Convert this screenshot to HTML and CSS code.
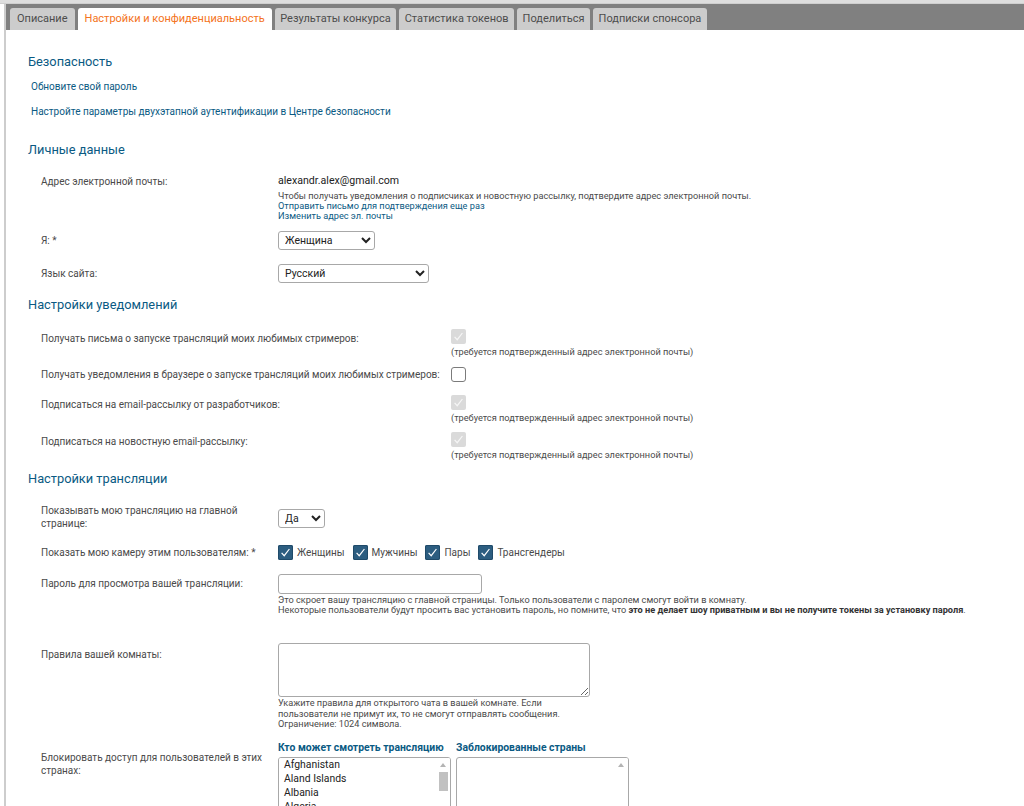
FILE: index.html
```html
<!DOCTYPE html>
<html lang="ru">
<head>
<meta charset="utf-8">
<title>Настройки и конфиденциальность</title>
<link rel="stylesheet" href="styles.css">
</head>
<body>
<div class="topline"></div>
<div class="frame">
  <nav class="tabs">
    <a class="tab">Описание</a>
    <a class="tab active">Настройки и конфиденциальность</a>
    <a class="tab">Результаты конкурса</a>
    <a class="tab">Статистика токенов</a>
    <a class="tab">Поделиться</a>
    <a class="tab">Подписки спонсора</a>
  </nav>
  <main class="content">
    <h2 class="h-security">Безопасность</h2>
    <a class="sec-link">Обновите свой пароль</a>
    <a class="sec-link">Настройте параметры двухэтапной аутентификации в Центре безопасности</a>

    <h2 class="h-personal">Личные данные</h2>
    <div class="row row-email">
      <div class="label lbl-email">Адрес электронной почты:</div>
      <div class="value">
        <div class="email">alexandr.alex@gmail.com</div>
        <div class="small">
          <div>Чтобы получать уведомления о подписчиках и новостную рассылку, подтвердите адрес электронной почты.</div>
          <a class="small-link">Отправить письмо для подтверждения еще раз</a>
          <a class="small-link">Изменить адрес эл. почты</a>
        </div>
      </div>
    </div>
    <div class="row row-gender">
      <div class="label lbl-select">Я: *</div>
      <div class="value">
        <select class="sel sel-gender"><option>Женщина</option><option>Мужчина</option><option>Пара</option><option>Трансгендер</option></select>
      </div>
    </div>
    <div class="row row-lang">
      <div class="label lbl-select">Язык сайта:</div>
      <div class="value">
        <select class="sel sel-lang"><option>Русский</option><option>English</option></select>
      </div>
    </div>

    <h2 class="h-notify">Настройки уведомлений</h2>
    <div class="notify">
      <div class="nrow n1">
        <div class="label nlabel">Получать письма о запуске трансляций моих любимых стримеров:</div>
        <div class="value">
          <span class="cb cb-disabled"><svg viewBox="0 0 15 15" width="15" height="15"><path d="M3.6 7.9 L6.2 10.7 L11.4 4" fill="none" stroke="#f6f6f6" stroke-width="1.2"/></svg></span>
          <div class="note">(требуется подтвержденный адрес электронной почты)</div>
        </div>
      </div>
      <div class="nrow n2">
        <div class="label nlabel-mid">Получать уведомления в браузере о запуске трансляций моих любимых стримеров:</div>
        <div class="value">
          <span class="cb cb-empty"></span>
        </div>
      </div>
      <div class="nrow n3">
        <div class="label nlabel">Подписаться на email-рассылку от разработчиков:</div>
        <div class="value">
          <span class="cb cb-disabled"><svg viewBox="0 0 15 15" width="15" height="15"><path d="M3.6 7.9 L6.2 10.7 L11.4 4" fill="none" stroke="#f6f6f6" stroke-width="1.2"/></svg></span>
          <div class="note">(требуется подтвержденный адрес электронной почты)</div>
        </div>
      </div>
      <div class="nrow n4">
        <div class="label nlabel">Подписаться на новостную email-рассылку:</div>
        <div class="value">
          <span class="cb cb-disabled"><svg viewBox="0 0 15 15" width="15" height="15"><path d="M3.6 7.9 L6.2 10.7 L11.4 4" fill="none" stroke="#f6f6f6" stroke-width="1.2"/></svg></span>
          <div class="note">(требуется подтвержденный адрес электронной почты)</div>
        </div>
      </div>
    </div>

    <h2 class="h-broadcast">Настройки трансляции</h2>
    <div class="row row-show">
      <div class="label lbl-two">Показывать мою трансляцию на главной странице:</div>
      <div class="value value-center">
        <select class="sel sel-yes"><option>Да</option><option>Нет</option></select>
      </div>
    </div>
    <div class="row row-cam">
      <div class="label lbl-cam">Показать мою камеру этим пользователям: *</div>
      <div class="value cams">
        <label class="cam"><span class="cb cb-on"><svg viewBox="0 0 15 15" width="15" height="15"><path d="M3.6 7.9 L6.2 10.7 L11.4 4" fill="none" stroke="#fff" stroke-width="1.2"/></svg></span>Женщины</label>
        <label class="cam"><span class="cb cb-on"><svg viewBox="0 0 15 15" width="15" height="15"><path d="M3.6 7.9 L6.2 10.7 L11.4 4" fill="none" stroke="#fff" stroke-width="1.2"/></svg></span>Мужчины</label>
        <label class="cam"><span class="cb cb-on"><svg viewBox="0 0 15 15" width="15" height="15"><path d="M3.6 7.9 L6.2 10.7 L11.4 4" fill="none" stroke="#fff" stroke-width="1.2"/></svg></span>Пары</label>
        <label class="cam"><span class="cb cb-on"><svg viewBox="0 0 15 15" width="15" height="15"><path d="M3.6 7.9 L6.2 10.7 L11.4 4" fill="none" stroke="#fff" stroke-width="1.2"/></svg></span>Трансгендеры</label>
      </div>
    </div>
    <div class="row row-pass">
      <div class="label lbl-input">Пароль для просмотра вашей трансляции:</div>
      <div class="value">
        <input class="txt pass" type="text">
        <div class="help">
          <div>Это скроет вашу трансляцию с главной страницы. Только пользователи с паролем смогут войти в комнату.</div>
          <div>Некоторые пользователи будут просить вас установить пароль, но помните, что <b>это не делает шоу приватным и вы не получите токены за установку пароля</b>.</div>
        </div>
      </div>
    </div>
    <div class="row row-rules">
      <div class="label lbl-rules">Правила вашей комнаты:</div>
      <div class="value">
        <textarea class="txt rules"></textarea>
        <div class="help help-rules">Укажите правила для открытого чата в вашей комнате. Если пользователи не примут их, то не смогут отправлять сообщения. Ограничение: 1024 символа.</div>
      </div>
    </div>
    <div class="row row-block">
      <div class="label lbl-block">Блокировать доступ для пользователей в этих странах:</div>
      <div class="value lists">
        <div class="list-col">
          <div class="list-title">Кто может смотреть трансляцию</div>
          <div class="list-wrap">
            <select class="listbox" multiple>
              <option>Afghanistan</option>
              <option>Aland Islands</option>
              <option>Albania</option>
              <option>Algeria</option>
              <option>American Samoa</option>
              <option>Andorra</option>
              <option>Angola</option>
              <option>Anguilla</option>
              <option>Antarctica</option>
              <option>Antigua and Barbuda</option>
              <option>Argentina</option>
              <option>Armenia</option>
              <option>Aruba</option>
              <option>Australia</option>
              <option>Austria</option>
              <option>Azerbaijan</option>
              <option>Bahamas</option>
              <option>Bahrain</option>
              <option>Bangladesh</option>
              <option>Barbados</option>
              <option>Belarus</option>
              <option>Belgium</option>
            </select>
            <div class="fake-scroll"><span class="arrow-up"></span><span class="thumb"></span></div>
          </div>
        </div>
        <div class="list-col">
          <div class="list-title">Заблокированные страны</div>
          <div class="list-wrap">
            <select class="listbox" multiple></select>
            <div class="fake-scroll"><span class="arrow-up"></span></div>
          </div>
        </div>
      </div>
    </div>
  </main>
</div>
</body>
</html>
```
FILE: styles.css
```css
* { box-sizing: border-box; }
html, body { margin: 0; padding: 0; background: #fff; }
body {
  font-family: Roboto, "Liberation Sans", Arial, sans-serif;
  color: #4a4a4a;
  font-size: 10px;
}
a { color: #0a5a83; text-decoration: none; cursor: pointer; }

.topline { height: 4px; background: #dedede; border-bottom: 1px solid #cfcfcf; }
.frame { margin-left: 4px; border-left: 2px solid #cdcdcd; min-height: 801px; }

.tabs {
  display: flex;
  align-items: flex-end;
  height: 26px;
  background: #808080;
  padding: 0 0 0 4px;
  gap: 3px;
}
.tab {
  height: 22px;
  line-height: 22px;
  padding: 0 5.5px;
  background: #cccccc;
  color: #4d4d4d;
  font-size: 11px;
  border-radius: 3px 3px 0 0;
  white-space: nowrap;
}
.tab:first-child { padding: 0 7px; }
.tab.active { background: #fff; color: #f47321; padding: 0 7px; }

.content { padding: 0 0 0 22px; }

h2 {
  margin: 0;
  font-size: 12.8px;
  line-height: 18px;
  font-weight: normal;
  color: #0a5a83;
}
.h-security { margin-top: 23px; margin-bottom: 3px; }
.sec-link { display: block; line-height: 25px; padding-left: 3px; font-size: 10px; }
.h-personal { margin-top: 17px; }
.h-notify { margin-top: 13px; }
.h-broadcast { margin-top: 9px; }

.row {
  display: grid;
  grid-template-columns: 224px 1fr;
  column-gap: 13px;
  padding-left: 13px;
}
.label { color: #4a4a4a; font-size: 10px; }
.value { min-width: 0; }

.row-email { margin-top: 15px; }
.lbl-email { line-height: 14px; padding-top: 1px; }
.email { font-size: 10.6px; line-height: 14px; color: #222; }
.small { margin-top: 3px; font-size: 9.2px; line-height: 10px; color: #4a4a4a; }
.small-link { display: block; font-size: 9.2px; line-height: 10px; }

.row-gender { margin-top: 10px; }
.row-lang { margin-top: 14px; }
.lbl-select { line-height: 19px; }

.sel {
  display: block;
  height: 19px;
  font-family: Roboto, "Liberation Sans", Arial, sans-serif;
  font-size: 10.5px;
  color: #222;
  background: #fff;
  border: 1px solid #a8a8a8;
  border-radius: 3px;
  padding: 0 2px;
}
.sel-gender { width: 97px; }
.sel-lang { width: 151px; }
.sel-yes { width: 47px; }

.notify {
  display: grid;
  grid-template-columns: 405px 1fr;
  column-gap: 5px;
  padding-left: 13px;
  margin-top: 15px;
}
.nrow { display: contents; }
.nlabel { line-height: 14px; padding-top: 3px; }
.nlabel-mid { line-height: 15px; }
.n1 > * { margin-bottom: 9px; }
.n2 > * { margin-bottom: 13px; }
.n3 > * { margin-bottom: 8px; }
.note { margin-top: 2px; font-size: 9.2px; line-height: 12px; color: #4a4a4a; white-space: nowrap; }

.cb {
  display: block;
  width: 15px;
  height: 15px;
  border-radius: 2px;
  flex: none;
}
.cb svg { display: block; }
.cb-disabled { background: #dadada; border: 0; }
.cb-empty { background: #fff; border: 1px solid #7b7b7b; border-radius: 3px; }
.cb-on { background: #2c5d80; box-shadow: inset 0 0 0 1px #1f4a69; }

.row-show { margin-top: 16px; align-items: center; }
.lbl-two { line-height: 13px; }
.value-center { padding-top: 3px; }

.row-cam { margin-top: 15px; }
.lbl-cam { line-height: 15px; }
.cams { display: flex; align-items: center; gap: 8px; }
.cam { display: flex; align-items: center; gap: 4px; font-size: 10px; color: #4a4a4a; line-height: 15px; }

.row-pass { margin-top: 14px; }
.lbl-input { line-height: 20px; }
.txt {
  display: block;
  border: 1px solid #a8a8a8;
  border-radius: 3px;
  background: #fff;
  font-family: Roboto, "Liberation Sans", Arial, sans-serif;
  font-size: 11px;
  margin: 0;
}
.pass { width: 204px; height: 20px; }
.help { font-size: 9.2px; line-height: 10px; color: #4a4a4a; margin-top: 1px; white-space: nowrap; }
.help b { color: #333; }

.row-rules { margin-top: 28px; }
.lbl-rules { line-height: 14px; padding-top: 5px; }
.rules { width: 312px; height: 54px; resize: both; }
.help-rules { width: 290px; line-height: 10.5px; white-space: normal; }

.row-block { margin-top: 11px; }
.lbl-block { line-height: 13px; padding-top: 10px; }
.lists { display: flex; gap: 5px; }
.list-title { font-size: 10.4px; font-weight: bold; color: #0a5a83; line-height: 14px; margin-bottom: 2px; white-space: nowrap; }
.list-wrap { position: relative; width: 173px; }
.listbox {
  display: block;
  width: 173px;
  height: 90px;
  border: 1px solid #a8a8a8;
  border-radius: 3px;
  font-family: Roboto, "Liberation Sans", Arial, sans-serif;
  font-size: 10.4px;
  color: #222;
  padding: 0 0 0 3px;
  background: #fff;
}
.listbox option { line-height: 12px; padding: 0 2px 1px; }

.fake-scroll {
  position: absolute;
  top: 1px;
  right: 1px;
  bottom: 1px;
  width: 13px;
  background: #fff;
  border-radius: 0 2px 2px 0;
}
.arrow-up {
  position: absolute;
  top: 5px;
  left: 3px;
  width: 0;
  height: 0;
  border-left: 3.5px solid transparent;
  border-right: 3.5px solid transparent;
  border-bottom: 4px solid #b4b4b4;
}
.thumb {
  position: absolute;
  top: 14px;
  left: 2px;
  width: 9px;
  height: 19px;
  background: #c1c1c1;
}
```
